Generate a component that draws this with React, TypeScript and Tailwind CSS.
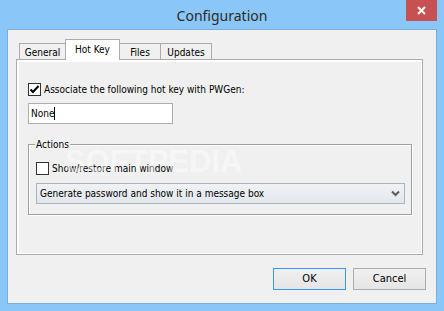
import React from "react";

// small drawings used by the dialog
const CheckMark = () => (
    <svg width="11" height="11" viewBox="0 0 11 11">
        <path d="M1.5 5.5 L4 8 L9.5 2" fill="none" stroke="#000" strokeWidth="2" />
    </svg>
)

const Chevron = () => (
    <svg width="9" height="7" viewBox="0 0 9 7">
        <path d="M1 1.5 L4.5 5 L8 1.5" fill="none" stroke="#5a5a5a" strokeWidth="2" />
    </svg>
)

interface ICheckProps {
    checked?: boolean;
    label: string;
}

const CheckBox: React.FC<ICheckProps> = ({ checked, label }) => (
    <div className="flex items-center">
        <div className="w-[13px] h-[13px] border border-[#333333] bg-white flex items-center justify-center">
            {checked && <CheckMark />}
        </div>
        <span className="ml-[3px] leading-[13px]">{label}</span>
    </div>
)

interface ITabProps {
    label: string;
    width: string;
    active?: boolean;
}

const Tab: React.FC<ITabProps> = ({ label, width, active }) => (
    active
        ? <div className={`${width} -ml-px h-[21px] -mb-px relative z-10 bg-white border border-b-0 border-[#acacac] flex justify-center pt-[3px] leading-[13px]`}>{label}</div>
        : <div className={`${width} -ml-px first:ml-0 h-[16px] bg-[#f0f0f0] border border-b-0 border-[#acacac] flex justify-center pt-[2px] leading-[13px]`}>{label}</div>
)

export default function App() {
    return (
        <div className="w-[444px] h-[311px] bg-[#8ac6f7] flex flex-col text-[10px] text-black font-['DejaVu_Sans_Condensed','DejaVu_Sans',sans-serif]">
            {/* title bar */}
            <div className="relative h-[29px] flex items-center justify-center">
                <span className="text-[14px] text-[#2b2b2b] font-['Noto_Sans',sans-serif] mt-[2px]">Configuration</span>
                <div className="absolute top-0 right-[7px] w-[31px] h-[21px] bg-[#c75050] flex items-center justify-center">
                    <svg width="9" height="9" viewBox="0 0 9 9">
                        <path d="M1 1 L8 8 M8 1 L1 8" stroke="#fff" strokeWidth="2" />
                    </svg>
                </div>
            </div>

            <div className="mx-[7px] h-[275px] border border-[#78afdf] bg-[#f0f0f0] flex flex-col">
                <div className="ml-[8px] mt-[9px] w-[407px]">
                    <div className="flex items-end h-[20px] pl-[3px]">
                        <Tab label="General" width="w-[47px]" />
                        <Tab label="Hot Key" width="w-[55px]" active />
                        <Tab label="Files" width="w-[42px]" />
                        <Tab label="Updates" width="w-[52px]" />
                    </div>
                    <div className="h-[196px] border border-[#acacac] bg-white pt-[2px] pl-[2px] pr-px pb-px">
                        <div className="relative h-full bg-[#f0f0f0] flex flex-col">
                            <div className="ml-[9px] mt-[21px]">
                                <CheckBox checked label="Associate the following hot key with PWGen:" />
                            </div>
                            <div className="ml-[9px] mt-[7px] w-[145px] h-[21px] border border-[#abadb3] bg-white flex items-center pl-[2px]">
                                <span>None</span>
                                <span className="inline-block w-px h-[13px] bg-black" />
                            </div>

                            <div className="relative ml-[9px] mt-[20px] w-[384px] h-[71px] border border-[#a0a0a0] shadow-[1px_1px_0_#ffffff,inset_1px_1px_0_#ffffff] pl-[7px]">
                                <span className="absolute -top-[7px] left-[6px] bg-[#f0f0f0] px-px leading-[13px]">Actions</span>
                                <div className="mt-[17px]">
                                    <CheckBox label="Show/restore main window" />
                                </div>
                                <div className="mt-[8px] w-[369px] h-[21px] border border-[#a9b4c2] bg-gradient-to-b from-[#f0f2f5] to-[#e3e7eb] flex items-center justify-between pl-[3px] pr-[4px]">
                                    <span>Generate password and show it in a message box</span>
                                    <Chevron />
                                </div>
                            </div>

                            {/* watermark over the page */}
                            <span className="absolute left-[46px] top-[84px] text-[31px] leading-none font-bold text-white/45 font-['Liberation_Sans',sans-serif] pointer-events-none">SOFTPEDIA</span>
                        </div>
                    </div>
                </div>

                <div className="flex justify-end gap-[7px] mt-[13px] mr-[10px]">
                    <button type="button" className="w-[73px] h-[22px] border border-[#3399ff] bg-gradient-to-b from-[#f0f0f0] to-[#e5e5e5] text-[11px]">OK</button>
                    <button type="button" className="w-[73px] h-[22px] border border-[#acacac] bg-gradient-to-b from-[#f0f0f0] to-[#e5e5e5] text-[11px]">Cancel</button>
                </div>
            </div>
        </div>
    )
}
